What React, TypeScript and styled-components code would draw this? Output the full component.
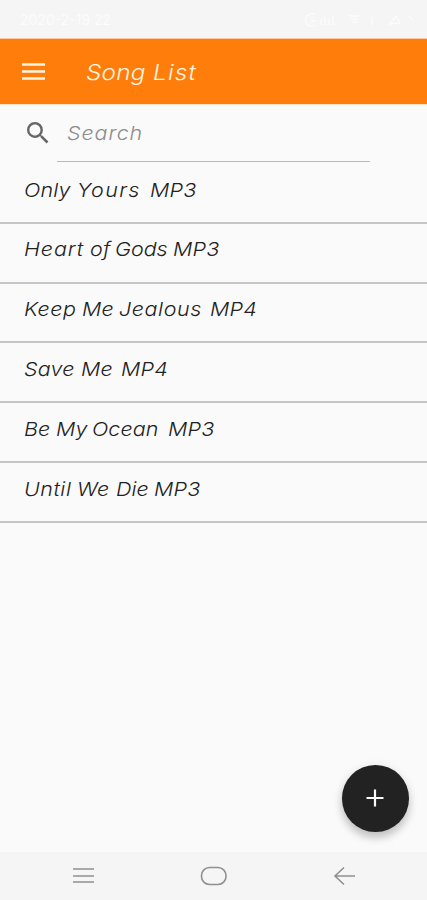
import React from "react";
import styled, { createGlobalStyle } from "styled-components";

const Global = createGlobalStyle`
  * { box-sizing: border-box; }
  body { margin: 0; background: #fafafa; font-family: Inter, "Open Sans", sans-serif; }
`;

const Screen = styled.div`
  width: 427px;
  height: 900px;
  display: flex;
  flex-direction: column;
  background: #fafafa;
  overflow: hidden;
`;

const StatusBar = styled.div`
  height: 39px;
  flex: none;
  padding: 1px 13px 0 20px;
  display: flex;
  align-items: center;
  justify-content: space-between;
  background: #f5f5f5;
  border-bottom: 1px solid #fbc9a0;
  color: #fcfcfc;
  font-size: 14px;
`;

const StatusIcons = styled.svg`
  width: 110px;
  height: 18px;
`;

const AppBar = styled.header`
  height: 66px;
  flex: none;
  display: flex;
  align-items: center;
  padding-left: 22px;
  background: #ff7d0a;
  border-bottom: 1px solid #ffe3cb;
`;

const MenuIcon = styled.svg`
  width: 24px;
  height: 20px;
  margin-right: 40px;
`;

/* Extended oblique lettering: the whole line is widened from its left edge. */
const Line = styled.div`
  display: flex;
  width: max-content;
  font-style: italic;
  font-weight: 300;
  font-size: 19px;
  line-height: 28px;
  white-space: pre;
  transform: scaleX(1.13);
  transform-origin: 0 50%;
`;

const Title = styled(Line)`
  color: #fff5e6;
  font-size: 21.5px;
  font-weight: 350;
`;

const Word = styled.span<{ $advance: number; $spacing: number }>`
  width: ${(p) => p.$advance / 1.13}px;
  letter-spacing: ${(p) => p.$spacing / 1.13}px;
`;

const SearchRow = styled.div`
  height: 57px;
  flex: none;
  display: flex;
  padding: 0 57px 0 27px;
`;

const SearchIcon = styled.svg`
  width: 22px;
  height: 22px;
  margin-top: 17px;
`;

const SearchField = styled.div`
  flex: 1;
  margin-left: 8px;
  padding: 15px 0 0 10px;
  color: #8c8c8c;
  border-bottom: 1px solid #b8b8b8;
`;

const List = styled.div`
  flex: 1;
  padding-top: 2px;
`;

const Row = styled.div`
  height: 59.8px;
  padding: 12.7px 0 0 24px;
  color: #222;
  border-bottom: 2px solid #c6c6c6;
`;

const FabArea = styled.div`
  height: 87px;
  flex: none;
  display: flex;
  justify-content: flex-end;
  padding-right: 18.5px;
`;

const Fab = styled.button`
  width: 66.5px;
  height: 66.5px;
  padding: 0;
  border: 0;
  border-radius: 50%;
  display: grid;
  place-items: center;
  background: #222;
  box-shadow: 0 6px 9px rgba(0, 0, 0, 0.2), 0 1px 12px rgba(0, 0, 0, 0.07);
`;

const NavBar = styled.nav`
  height: 48px;
  flex: none;
  display: flex;
  align-items: center;
  justify-content: space-between;
  padding: 0 72px 0 72px;
  background: #f5f5f5;
`;

type WordSpec = [text: string, advance: number, spacing: number];

const songs: WordSpec[][] = [
  [["Only ", 53, 0.2], ["Yours ", 73, 1.4], ["MP3", 46, 0.2]],
  [["Heart ", 66, 0.9], ["of ", 25, 0.3], ["Gods ", 58, 0], ["MP3", 46, 0.2]],
  [["Keep ", 58, 0.5], ["Me ", 37, 0.2], ["Jealous ", 91, 0.6], ["MP4", 46, 0.2]],
  [["Save ", 57, 0.2], ["Me ", 40, 0.2], ["MP4", 46, 0.2]],
  [["Be ", 32, 0], ["My ", 36, 0], ["Ocean ", 76, 0.1], ["MP3", 46, 0.2]],
  [["Until ", 53, 0.5], ["We ", 39, 0.3], ["Die ", 38, 0.1], ["MP3", 46, 0.2]],
];

function Words({ words }: { words: WordSpec[] }) {
  return (
    <>
      {words.map(([text, advance, spacing], i) => (
        <Word key={i} $advance={advance} $spacing={spacing}>{text}</Word>
      ))}
    </>
  );
}

export default function App() {
  return (
    <Screen>
      <Global />
      <StatusBar>
        <span>2020-2-19 22</span>
        <StatusIcons viewBox="0 0 110 18" fill="none" stroke="#fcfcfc" strokeWidth="1.3">
          <path d="M11 4a6 6 0 1 0 0 10M8 6v4h4M17 14V8M21 14V6M25 14V8M29 14V4M45 5h10M47 8h7M48 11h5M68 6v8M86 13l6-8 4 7zM105 5l4 4" />
        </StatusIcons>
      </StatusBar>
      <AppBar>
        <MenuIcon viewBox="0 0 24 20" stroke="#fff5e6" strokeWidth="2.5">
          <path d="M0 2.5h23M0 9.5h23M0 16.5h23" />
        </MenuIcon>
        <Title>
          <Words words={[["Song ", 67, 0.2], ["List", 45, 1.2]]} />
        </Title>
      </AppBar>
      <SearchRow>
        <SearchIcon viewBox="3 3 18 18" fill="#666">
          <path d="M15.5 14h-.79l-.28-.27A6.471 6.471 0 0 0 16 9.5 6.5 6.5 0 1 0 9.5 16c1.61 0 3.09-.59 4.23-1.57l.27.28v.79l5 4.99L20.49 19l-4.99-5zm-6 0C7.01 14 5 11.99 5 9.5S7.01 5 9.5 5 14 7.01 14 9.5 11.99 14 9.5 14z" />
        </SearchIcon>
        <SearchField>
          <Line>
            <Words words={[["Search", 76, 0.9]]} />
          </Line>
        </SearchField>
      </SearchRow>
      <List>
        {songs.map((words, i) => (
          <Row key={i}>
            <Line>
              <Words words={words} />
            </Line>
          </Row>
        ))}
      </List>
      <FabArea>
        <Fab aria-label="Add">
          <svg width="18" height="18" stroke="#fafafa" strokeWidth="2.2">
            <path d="M.5 9h17M9 .5v17" />
          </svg>
        </Fab>
      </FabArea>
      <NavBar>
        <svg width="23" height="18" stroke="#909090" strokeWidth="1.6">
          <path d="M1 2h21M1 9h21M1 15h21" />
        </svg>
        <svg width="28" height="20" fill="none" stroke="#909090" strokeWidth="1.6">
          <rect x="1.500" y="1.500" width="24.500" height="17" rx="8" />
        </svg>
        <svg width="22" height="20" fill="none" stroke="#909090" strokeWidth="1.6">
          <path d="M22 10H2M11 1.500L2 10l9 8.500" />
        </svg>
      </NavBar>
    </Screen>
  );
}
